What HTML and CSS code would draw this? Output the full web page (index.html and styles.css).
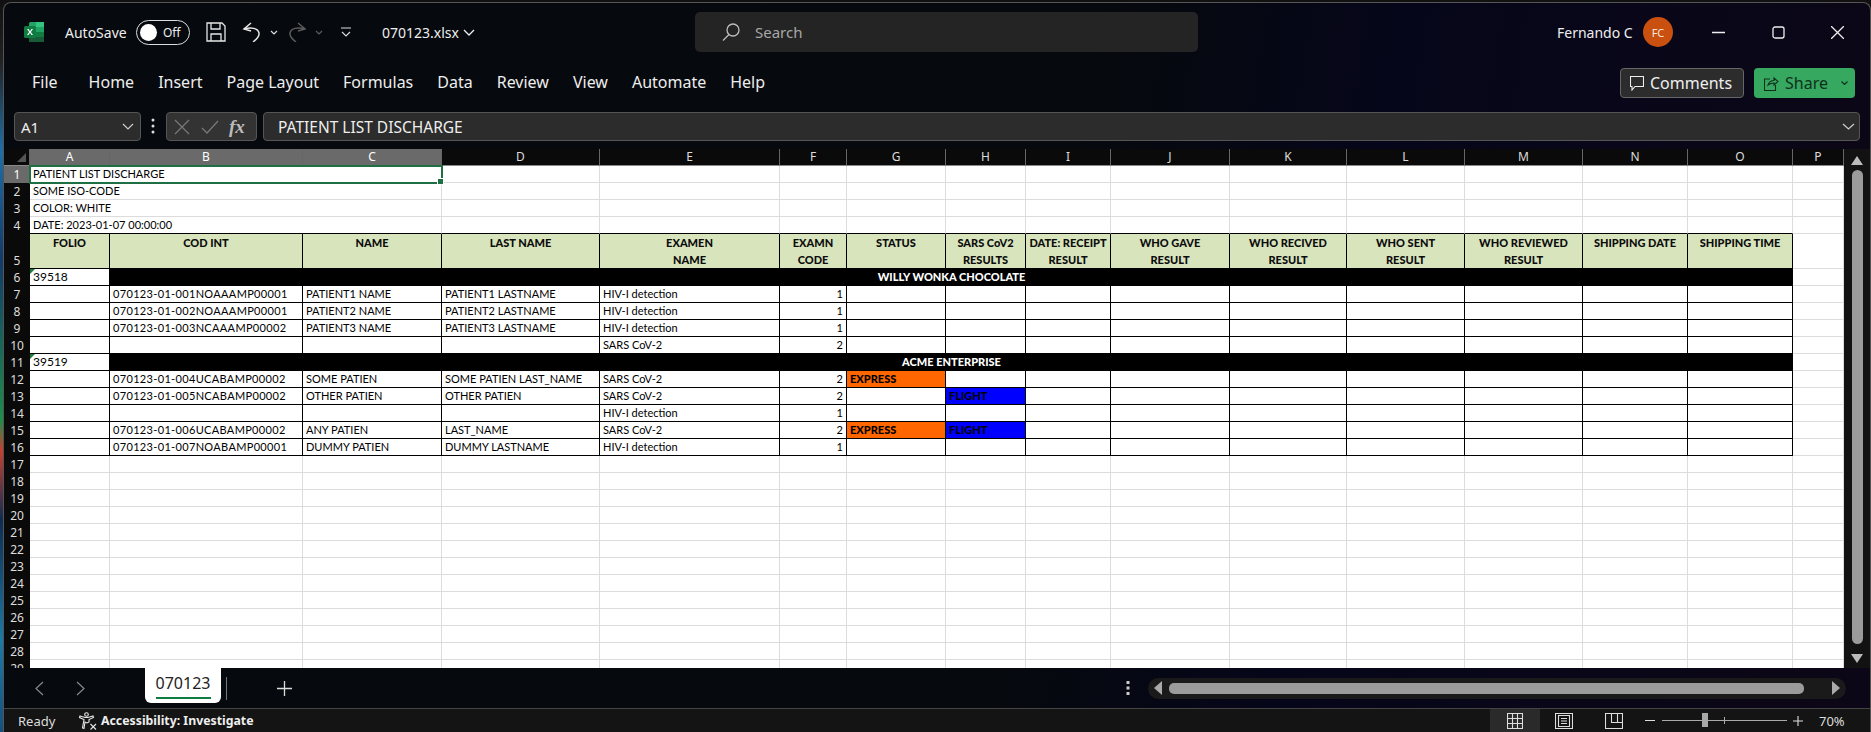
FILE: index.html
```html
<!DOCTYPE html>
<html>
<head>
    <meta charset="utf-8">
    <title>070123.xlsx</title>
    <link rel="stylesheet" href="styles.css">
</head>
<body>
<div class="window">
    <header class="title-bar">
        <svg class="xl-logo" width="20" height="20" viewBox="0 0 20 20">
            <rect x="5" y="0" width="15" height="20" rx="1.5" fill="#21a366"/>
            <rect x="12" y="0" width="8" height="5" fill="#33c481"/>
            <rect x="12" y="10" width="8" height="5" fill="#107c41"/>
            <rect x="5" y="15" width="15" height="5" fill="#185c37"/>
            <rect x="0" y="4" width="12" height="12" rx="1.5" fill="#107c41"/>
            <path d="M3 7l1.5 0 1.5 2.3L7.5 7 9 7 6.8 10 9 13 7.5 13 6 10.7 4.500 13 3 13 5.200 10z" fill="#fff"/>
        </svg>
        <span class="autosave">AutoSave</span>
        <span class="toggle"><i class="knob"></i><em>Off</em></span>
        <svg class="save-ic" width="20" height="20" viewBox="0 0 20 20" fill="none" stroke="#e6e6e6" stroke-width="1.3">
            <path d="M1 1h15l3 3v15H1z"/><path d="M5 1v6h9V1"/><path d="M5 19v-7h10v7"/>
        </svg>
        <svg class="undo-ic" width="20" height="20" viewBox="0 0 20 20" fill="none" stroke="#e6e6e6" stroke-width="1.5">
            <path d="M9 1L2 7l7 2"/><path d="M2 7c7-2 14-1 15 4 .5 3-2 6-6 9"/>
        </svg>
        <svg class="chev-sm" width="8" height="5" viewBox="0 0 8 5" fill="none" stroke="#ddd" stroke-width="1.200"><path d="M1 1l3 3 3-3"/></svg>
        <svg class="redo-ic" width="20" height="20" viewBox="0 0 20 20" fill="none" stroke="#5c5c5c" stroke-width="1.5">
            <path d="M11 1l7 6-7 2"/><path d="M18 7c-7-2-14-1-15 4-.5 3 2 6 6 9"/>
        </svg>
        <svg class="chev-sm" width="8" height="5" viewBox="0 0 8 5" fill="none" stroke="#5c5c5c" stroke-width="1.200"><path d="M1 1l3 3 3-3"/></svg>
        <svg class="qat-more" width="10" height="10" viewBox="0 0 10 10" fill="none" stroke="#ddd" stroke-width="1.100"><path d="M0 1h10"/><path d="M1 5l4 4 4-4"/></svg>
        <span class="file-name">070123.xlsx</span>
        <svg class="chev-file" width="12" height="7" viewBox="0 0 12 7" fill="none" stroke="#eee" stroke-width="1.300"><path d="M1 1l5 5 5-5"/></svg>
        <div class="search-box">
            <svg width="20" height="20" viewBox="0 0 20 20" fill="none" stroke="#bdbdbd" stroke-width="1.300"><circle cx="12" cy="8" r="6"/><path d="M8 12.500L2 18.500"/></svg>
            <span>Search</span>
        </div>
        <span class="user-name">Fernando C</span>
        <span class="avatar">FC</span>
        <svg class="win-min" width="13" height="13" viewBox="0 0 13 13" stroke="#eee" stroke-width="1.300"><path d="M0 6.500h13"/></svg>
        <svg class="win-max" width="13" height="13" viewBox="0 0 13 13" fill="none" stroke="#eee" stroke-width="1.300"><rect x="1" y="1" width="11" height="11" rx="2"/></svg>
        <svg class="win-close" width="13" height="13" viewBox="0 0 13 13" stroke="#eee" stroke-width="1.300"><path d="M0 0l13 13M13 0L0 13"/></svg>
    </header>

    <nav class="ribbon">
        <span class="tab-file">File</span>
        <span>Home</span>
        <span>Insert</span>
        <span>Page Layout</span>
        <span>Formulas</span>
        <span>Data</span>
        <span>Review</span>
        <span>View</span>
        <span>Automate</span>
        <span>Help</span>
        <button class="btn-comments">
            <svg width="14" height="15" viewBox="0 0 14 15" fill="none" stroke="#eee" stroke-width="1.100"><path d="M.5.500h13v10H5l-3 3.500v-3.500H.5z"/></svg>
            Comments
        </button>
        <button class="btn-share">
            <svg width="15" height="15" viewBox="0 0 15 15" fill="none" stroke="#10301c" stroke-width="1.100"><path d="M6 3H.5v11.500h11V9"/><path d="M4 9c1-3 4-4.500 6-4.500V2l4 3.500L10 9V7C8 7 6 7.500 4 9z"/></svg>
            Share
            <svg class="share-chev" width="7" height="4" viewBox="0 0 7 4" fill="none" stroke="#10301c" stroke-width="1.200"><path d="M.5.500l3 3 3-3"/></svg>
        </button>
    </nav>

    <div class="formula-bar">
        <div class="name-box">
            <span>A1</span>
            <svg width="12" height="7" viewBox="0 0 12 7" fill="none" stroke="#ccc" stroke-width="1.200"><path d="M1 1l5 5 5-5"/></svg>
        </div>
        <svg class="fb-dots" width="4" height="16" viewBox="0 0 4 16" fill="#ddd"><circle cx="2" cy="2" r="1.500"/><circle cx="2" cy="8" r="1.500"/><circle cx="2" cy="14" r="1.500"/></svg>
        <div class="fx-box">
            <svg width="16" height="16" viewBox="0 0 16 16" stroke="#777" stroke-width="1.300"><path d="M1 1l14 14M15 1L1 15"/></svg>
            <svg width="18" height="14" viewBox="0 0 18 14" fill="none" stroke="#777" stroke-width="1.300"><path d="M1 8l5 5L17 1"/></svg>
            <span>fx</span>
        </div>
        <div class="formula-input">
            <span>PATIENT LIST DISCHARGE</span>
            <svg width="13" height="7" viewBox="0 0 13 7" fill="none" stroke="#ccc" stroke-width="1.200"><path d="M1 1l5.500 5L12 1"/></svg>
        </div>
    </div>

    <div class="sheet-area">
        <div class="grid-wrap">
            <table class="sheet">
                <colgroup>
                    <col class="w-hdr"><col class="w-a"><col class="w-b"><col class="w-c"><col class="w-d"><col class="w-e"><col class="w-f"><col class="w-g"><col class="w-h"><col class="w-i"><col class="w-j"><col class="w-k"><col class="w-l"><col class="w-m"><col class="w-n"><col class="w-o"><col class="w-p">
                </colgroup>
                <tr class="col-heads">
                    <th class="corner"><i></i></th>
                    <th class="on">A</th><th class="on">B</th><th class="on">C</th><th>D</th><th>E</th><th>F</th><th>G</th><th>H</th><th>I</th><th>J</th><th>K</th><th>L</th><th>M</th><th>N</th><th>O</th><th>P</th>
                </tr>
                <tr><th class="on">1</th><td colspan="3" class="selected">PATIENT LIST DISCHARGE</td><td></td><td></td><td></td><td></td><td></td><td></td><td></td><td></td><td></td><td></td><td></td><td></td><td></td></tr>
                <tr><th>2</th><td colspan="3">SOME ISO-CODE</td><td></td><td></td><td></td><td></td><td></td><td></td><td></td><td></td><td></td><td></td><td></td><td></td><td></td></tr>
                <tr><th>3</th><td colspan="3">COLOR: WHITE</td><td></td><td></td><td></td><td></td><td></td><td></td><td></td><td></td><td></td><td></td><td></td><td></td><td></td></tr>
                <tr class="above-table"><th>4</th><td colspan="3">DATE: 2023-01-07 00:00:00</td><td></td><td></td><td></td><td></td><td></td><td></td><td></td><td></td><td></td><td></td><td></td><td></td><td></td></tr>
                <tr class="head-row">
                    <th class="tall">5</th>
                    <td>FOLIO</td><td>COD INT</td><td>NAME</td><td>LAST NAME</td><td>EXAMEN<br>NAME</td><td>EXAMN<br>CODE</td><td>STATUS</td><td>SARS CoV2<br>RESULTS</td><td>DATE: RECEIPT<br>RESULT</td><td>WHO GAVE<br>RESULT</td><td>WHO RECIVED<br>RESULT</td><td>WHO SENT<br>RESULT</td><td>WHO REVIEWED<br>RESULT</td><td>SHIPPING DATE</td><td>SHIPPING TIME</td>
                    <td class="free"></td>
                </tr>
                <tr class="data"><th>6</th><td class="folio">39518</td><td colspan="14" class="client">WILLY WONKA CHOCOLATE</td><td class="free"></td></tr>
                <tr class="data"><th>7</th><td></td><td class="code">070123-01-001NOAAAMP00001</td><td>PATIENT1 NAME</td><td>PATIENT1 LASTNAME</td><td>HIV-I detection</td><td class="num">1</td><td></td><td></td><td></td><td></td><td></td><td></td><td></td><td></td><td></td><td class="free"></td></tr>
                <tr class="data"><th>8</th><td></td><td class="code">070123-01-002NOAAAMP00001</td><td>PATIENT2 NAME</td><td>PATIENT2 LASTNAME</td><td>HIV-I detection</td><td class="num">1</td><td></td><td></td><td></td><td></td><td></td><td></td><td></td><td></td><td></td><td class="free"></td></tr>
                <tr class="data"><th>9</th><td></td><td class="code">070123-01-003NCAAAMP00002</td><td>PATIENT3 NAME</td><td>PATIENT3 LASTNAME</td><td>HIV-I detection</td><td class="num">1</td><td></td><td></td><td></td><td></td><td></td><td></td><td></td><td></td><td></td><td class="free"></td></tr>
                <tr class="data"><th>10</th><td></td><td></td><td></td><td></td><td>SARS CoV-2</td><td class="num">2</td><td></td><td></td><td></td><td></td><td></td><td></td><td></td><td></td><td></td><td class="free"></td></tr>
                <tr class="data"><th>11</th><td class="folio">39519</td><td colspan="14" class="client">ACME ENTERPRISE</td><td class="free"></td></tr>
                <tr class="data"><th>12</th><td></td><td class="code">070123-01-004UCABAMP00002</td><td>SOME PATIEN</td><td>SOME PATIEN LAST_NAME</td><td>SARS CoV-2</td><td class="num">2</td><td class="express">EXPRESS</td><td></td><td></td><td></td><td></td><td></td><td></td><td></td><td></td><td class="free"></td></tr>
                <tr class="data"><th>13</th><td></td><td class="code">070123-01-005NCABAMP00002</td><td>OTHER PATIEN</td><td>OTHER PATIEN</td><td>SARS CoV-2</td><td class="num">2</td><td></td><td class="flight">FLIGHT</td><td></td><td></td><td></td><td></td><td></td><td></td><td></td><td class="free"></td></tr>
                <tr class="data"><th>14</th><td></td><td></td><td></td><td></td><td>HIV-I detection</td><td class="num">1</td><td></td><td></td><td></td><td></td><td></td><td></td><td></td><td></td><td></td><td class="free"></td></tr>
                <tr class="data"><th>15</th><td></td><td class="code">070123-01-006UCABAMP00002</td><td>ANY PATIEN</td><td>LAST_NAME</td><td>SARS CoV-2</td><td class="num">2</td><td class="express">EXPRESS</td><td class="flight">FLIGHT</td><td></td><td></td><td></td><td></td><td></td><td></td><td></td><td class="free"></td></tr>
                <tr class="data"><th>16</th><td></td><td class="code">070123-01-007NOABAMP00001</td><td>DUMMY PATIEN</td><td>DUMMY LASTNAME</td><td>HIV-I detection</td><td class="num">1</td><td></td><td></td><td></td><td></td><td></td><td></td><td></td><td></td><td></td><td class="free"></td></tr>
                <tr><th>17</th><td></td><td></td><td></td><td></td><td></td><td></td><td></td><td></td><td></td><td></td><td></td><td></td><td></td><td></td><td></td><td></td></tr>
                <tr><th>18</th><td></td><td></td><td></td><td></td><td></td><td></td><td></td><td></td><td></td><td></td><td></td><td></td><td></td><td></td><td></td><td></td></tr>
                <tr><th>19</th><td></td><td></td><td></td><td></td><td></td><td></td><td></td><td></td><td></td><td></td><td></td><td></td><td></td><td></td><td></td><td></td></tr>
                <tr><th>20</th><td></td><td></td><td></td><td></td><td></td><td></td><td></td><td></td><td></td><td></td><td></td><td></td><td></td><td></td><td></td><td></td></tr>
                <tr><th>21</th><td></td><td></td><td></td><td></td><td></td><td></td><td></td><td></td><td></td><td></td><td></td><td></td><td></td><td></td><td></td><td></td></tr>
                <tr><th>22</th><td></td><td></td><td></td><td></td><td></td><td></td><td></td><td></td><td></td><td></td><td></td><td></td><td></td><td></td><td></td><td></td></tr>
                <tr><th>23</th><td></td><td></td><td></td><td></td><td></td><td></td><td></td><td></td><td></td><td></td><td></td><td></td><td></td><td></td><td></td><td></td></tr>
                <tr><th>24</th><td></td><td></td><td></td><td></td><td></td><td></td><td></td><td></td><td></td><td></td><td></td><td></td><td></td><td></td><td></td><td></td></tr>
                <tr><th>25</th><td></td><td></td><td></td><td></td><td></td><td></td><td></td><td></td><td></td><td></td><td></td><td></td><td></td><td></td><td></td><td></td></tr>
                <tr><th>26</th><td></td><td></td><td></td><td></td><td></td><td></td><td></td><td></td><td></td><td></td><td></td><td></td><td></td><td></td><td></td><td></td></tr>
                <tr><th>27</th><td></td><td></td><td></td><td></td><td></td><td></td><td></td><td></td><td></td><td></td><td></td><td></td><td></td><td></td><td></td><td></td></tr>
                <tr><th>28</th><td></td><td></td><td></td><td></td><td></td><td></td><td></td><td></td><td></td><td></td><td></td><td></td><td></td><td></td><td></td><td></td></tr>
                <tr><th>29</th><td></td><td></td><td></td><td></td><td></td><td></td><td></td><td></td><td></td><td></td><td></td><td></td><td></td><td></td><td></td><td></td></tr>
            </table>
        </div>
        <div class="v-scroll">
            <svg width="12" height="9" viewBox="0 0 12 9" fill="#bbb"><path d="M6 0l6 9H0z"/></svg>
            <div class="v-thumb"></div>
            <svg width="12" height="9" viewBox="0 0 12 9" fill="#bbb"><path d="M6 9L0 0h12z"/></svg>
        </div>
    </div>

    <div class="tabs-bar">
        <svg class="nav-prev" width="9" height="15" viewBox="0 0 9 15" fill="none" stroke="#888" stroke-width="1.200"><path d="M8 1L1 7.500 8 14"/></svg>
        <svg class="nav-next" width="9" height="15" viewBox="0 0 9 15" fill="none" stroke="#888" stroke-width="1.200"><path d="M1 1l7 6.500L1 14"/></svg>
        <div class="sheet-tab"><span>070123</span></div>
        <i class="tab-sep"></i>
        <svg class="tab-add" width="15" height="15" viewBox="0 0 15 15" stroke="#ddd" stroke-width="1.300"><path d="M7.500 0v15M0 7.500h15"/></svg>
        <svg class="tab-dots" width="4" height="14" viewBox="0 0 4 14" fill="#ccc"><rect x="0.500" y="0" width="3" height="3"/><rect x="0.500" y="5.500" width="3" height="3"/><rect x="0.500" y="11" width="3" height="3"/></svg>
        <div class="h-scroll">
            <svg width="8" height="14" viewBox="0 0 8 14" fill="#aaa"><path d="M8 0v14L0 7z"/></svg>
            <div class="h-thumb"></div>
            <svg class="h-right" width="8" height="14" viewBox="0 0 8 14" fill="#aaa"><path d="M0 0v14l8-7z"/></svg>
        </div>
    </div>

    <footer class="status-bar">
        <span class="ready">Ready</span>
        <svg class="a11y-ic" width="18" height="18" viewBox="0 0 18 18" fill="none" stroke="#e6e6e6" stroke-width="1.100">
            <circle cx="7.500" cy="2.500" r="1.800"/>
            <path d="M1 4l5 1.500h3L14 4l.5 1.500L10 7.500V10l-2 1-2-1-1 6.500-1.500-.5L5 7.500.5 5.500z"/>
            <path d="M11.500 12l5.500 5.500M17 12l-5.500 5.500"/>
        </svg>
        <b class="a11y-text">Accessibility: Investigate</b>
        <div class="view-btn view-on">
            <svg width="16" height="16" viewBox="0 0 16 16" fill="none" stroke="#ddd" stroke-width="1.100"><path d="M.5.500h15v15H.5zM5.500.500v15M10.500.500v15M.5 5.500h15M.5 10.500h15"/></svg>
        </div>
        <svg class="view-page" width="18" height="16" viewBox="0 0 18 16" fill="none" stroke="#ddd" stroke-width="1.100"><path d="M.5.500h17v15H.5zM3.500 2.500h11v11h-11zM6 5.500h6M6 8h6M6 10.500h6"/></svg>
        <svg class="view-break" width="18" height="16" viewBox="0 0 18 16" fill="none" stroke="#ddd" stroke-width="1.100"><path d="M.5.500h17v15H.5zM6.500.500v9h11M12.500.500v9"/></svg>
        <span class="zoom-minus"></span>
        <div class="zoom-track"><i class="zoom-mark"></i><i class="zoom-thumb"></i></div>
        <svg class="zoom-plus" width="10" height="10" viewBox="0 0 10 10" stroke="#ddd" stroke-width="1.100"><path d="M5 0v10M0 5h10"/></svg>
        <span class="zoom-pct">70%</span>
    </footer>
</div>
</body>
</html>
```

FILE: styles.css
```css
html, body {
    margin: 0;
    height: 732px;
    overflow: hidden;
}
body {
    background: linear-gradient(180deg, #111 0, #222 60px, #1d6fa8 150px, #123a6a 260px, #1a8f4a 420px, #c7402f 450px, #0d2c52 520px, #1a7aa8 640px, #14507f 732px);
}
svg {
    flex-shrink: 0;
    display: block;
}
.window {
    box-sizing: border-box;
    height: 730px;
    margin: 2px 0 0 3px;
    border: 1px solid #555;
    border-bottom: none;
    border-radius: 8px 8px 0 0;
    overflow: hidden;
    display: flex;
    flex-direction: column;
    color: #eee;
    font-family: "Noto Sans", sans-serif;
    background: linear-gradient(100deg, #06090d 0, #06090d 55%, #06061a 70%, #0c0716 100%);
}

/* title bar */
.title-bar {
    height: 46px;
    flex-shrink: 0;
    display: flex;
    align-items: center;
    font-size: 14px;
    padding-top: 12px;
    box-sizing: border-box;
}
.xl-logo { margin-left: 20px; }
.autosave { margin-left: 21px; width: 64px; white-space: nowrap; }
.toggle {
    margin-left: 7px;
    box-sizing: border-box;
    width: 54px;
    height: 25px;
    border: 1px solid #ddd;
    border-radius: 13px;
    display: flex;
    align-items: center;
    padding-left: 3px;
    gap: 6px;
    font-size: 12px;
}
.toggle .knob {
    width: 17px;
    height: 17px;
    border-radius: 50%;
    background: #fff;
}
.toggle em { font-style: normal; }
.save-ic { margin-left: 16px; }
.undo-ic { margin-left: 16px; }
.chev-sm { margin-left: 8px; }
.redo-ic { margin-left: 9px; }
.qat-more { margin-left: 18px; }
.file-name { margin-left: 31px; width: 76px; white-space: nowrap; }
.chev-file { margin-left: 5px; }
.search-box {
    margin-left: 220px;
    width: 503px;
    height: 40px;
    box-sizing: border-box;
    background: #242424;
    border-radius: 5px;
    display: flex;
    align-items: center;
    padding-left: 26px;
    gap: 14px;
    color: #a8a8a8;
    font-size: 15px;
}
.user-name { margin-left: 359px; width: 76px; white-space: nowrap; }
.avatar {
    margin-left: 10px;
    width: 30px;
    height: 30px;
    border-radius: 50%;
    background: #ca5010;
    display: flex;
    align-items: center;
    justify-content: center;
    font-size: 11px;
    color: #f5e6dc;
}
.win-min { margin-left: 39px; }
.win-max { margin-left: 47px; }
.win-close { margin-left: 46px; }

/* ribbon tabs */
.ribbon {
    height: 63px;
    flex-shrink: 0;
    display: flex;
    align-items: flex-start;
    font-size: 16px;
    gap: 24px;
    box-sizing: border-box;
    padding: 23px 15px 0 28px;
    line-height: 20px;
}
.ribbon .tab-file { margin-right: 7px; }
.btn-comments, .btn-share {
    font-family: inherit;
    font-size: 16px;
    color: #eee;
    height: 30px;
    box-sizing: border-box;
    border-radius: 4px;
    display: flex;
    align-items: center;
    margin-top: -4px;
    padding: 0;
}
.btn-comments {
    margin-left: auto;
    width: 124px;
    background: #2c2c2c;
    border: 1px solid #666;
    gap: 6px;
    padding-left: 9px;
}
.btn-share {
    margin-left: -14px;
    width: 101px;
    background: #36a860;
    border: none;
    color: #10301c;
    gap: 6px;
    padding-left: 10px;
}
.share-chev { margin-left: 7px; }

/* formula bar */
.formula-bar {
    height: 37px;
    flex-shrink: 0;
    display: flex;
    align-items: flex-start;
    font-size: 15px;
    box-sizing: border-box;
    padding-left: 10px;
}
.name-box, .fx-box, .formula-input {
    height: 29px;
    box-sizing: border-box;
    background: #2c2c2c;
    border: 1px solid #555;
    border-radius: 4px;
    display: flex;
    align-items: center;
}
.name-box {
    width: 127px;
    justify-content: space-between;
    padding: 0 6px 0 6px;
}
.fb-dots { margin: 6px 0 0 10px; }
.fx-box {
    margin-left: 11px;
    width: 91px;
    padding-left: 7px;
    gap: 11px;
    background: #333;
}
.fx-box span {
    font-family: "Liberation Serif", serif;
    font-style: italic;
    font-weight: bold;
    font-size: 19px;
    color: #bbb;
    margin-left: -1px;
}
.formula-input {
    margin-left: 6px;
    width: 1597px;
    justify-content: space-between;
    padding: 0 4px 0 14px;
    font-size: 15.5px;
}

/* sheet */
.sheet-area {
    height: 519px;
    flex-shrink: 0;
    display: flex;
    overflow: hidden;
}
.grid-wrap {
    width: 1840px;
    height: 519px;
    overflow: hidden;
    background: #fff;
}
.sheet {
    table-layout: fixed;
    width: 1840px;
    border-collapse: separate;
    border-spacing: 0;
    font-family: Lato, sans-serif;
    font-size: 11px;
    color: #000;
}
.w-hdr { width: 26px; }
.w-a { width: 80px; }
.w-b { width: 193px; }
.w-c { width: 139px; }
.w-d { width: 158px; }
.w-e { width: 180px; }
.w-f { width: 67px; }
.w-g { width: 99px; }
.w-h { width: 80px; }
.w-i { width: 85px; }
.w-j { width: 119px; }
.w-k { width: 117px; }
.w-l { width: 118px; }
.w-m { width: 118px; }
.w-n { width: 105px; }
.w-o { width: 105px; }
.w-p { width: 51px; }
.sheet tr { height: 17px; }
.sheet th {
    padding: 0;
    font-weight: normal;
    background: #0a0a0a;
    color: #ddd;
    font-size: 12px;
    line-height: 16px;
    text-align: center;
    font-family: "Noto Sans", sans-serif;
    overflow: hidden;
}
.sheet th.on { background: #6a6a6a; color: #fff; }
.sheet th.tall { vertical-align: bottom; }
.sheet td {
    box-sizing: border-box;
    padding: 0 2px 0 3px;
    height: 17px;
    line-height: 16px;
    border-right: 1px solid #dcdcdc;
    border-bottom: 1px solid #dcdcdc;
    white-space: nowrap;
    overflow: hidden;
    vertical-align: bottom;
}
.col-heads { height: 16px; }
.col-heads th {
    height: 16px;
    box-sizing: border-box;
    border-right: 1px solid #666;
    border-bottom: 1px solid #8a8a8a;
}
.col-heads th.corner { position: relative; background: #0a0a0a; }
.corner i {
    position: absolute;
    right: 3px;
    bottom: 3px;
    width: 0;
    height: 0;
    border-left: 9px solid transparent;
    border-bottom: 9px solid #555;
}
.sheet td.selected {
    position: relative;
    overflow: visible;
    outline: 2px solid #1f6f45;
    outline-offset: -1px;
}
.sheet td.selected::after {
    content: "";
    position: absolute;
    right: -3px;
    bottom: -3px;
    width: 5px;
    height: 5px;
    background: #1f6f45;
    border: 1px solid #fff;
}
.above-table td:nth-child(-n+15) { border-bottom-color: #000; }
.above-table td:last-child { border-bottom-color: #dcdcdc; }
.head-row { height: 34px; }
.head-row th { background: #0a0a0a; }
.head-row td {
    height: 34px;
    background: #d8e4bc;
    font-weight: 900;
    font-size: 11px;
    line-height: 17px;
    text-align: center;
    vertical-align: top;
    border-right: 1px solid #000;
    border-bottom: 1px solid #000;
    padding: 0;
    white-space: nowrap;
    color: #0c0c0c;
}
.data td {
    border-right: 1px solid #000;
    border-bottom: 1px solid #000;
}
.data td.code { letter-spacing: .33px; }
.data td.num { text-align: right; padding-right: 3px; }
.data td.folio { position: relative; font-size: 12px; vertical-align: bottom; }
.folio::before {
    content: "";
    position: absolute;
    left: 0;
    top: 0;
    border-top: 5px solid #1f7a3d;
    border-right: 5px solid transparent;
}
.data td.client {
    background: #000;
    color: #fff;
    font-weight: 900;
    text-align: center;
}
.data td.express { background: #ff6600; font-weight: 900; }
.data td.flight { background: #0000ff; font-weight: 900; }
.data td.free {
    border-right-color: #dcdcdc;
    border-bottom-color: #dcdcdc;
}
.head-row td.free {
    background: #fff;
    border-right-color: #dcdcdc;
    border-bottom-color: #dcdcdc;
}

.v-scroll {
    flex: 1;
    background: #121212;
    display: flex;
    flex-direction: column;
    align-items: center;
    padding-top: 7px;
    box-sizing: border-box;
}
.v-thumb {
    width: 11px;
    height: 474px;
    margin: 5px 0 10px;
    border-radius: 6px;
    background: #9b9b9b;
}

/* sheet tabs and scrollbar */
.tabs-bar {
    height: 40px;
    flex-shrink: 0;
    display: flex;
    align-items: center;
}
.nav-prev { margin-left: 31px; }
.nav-next { margin-left: 32px; }
.sheet-tab {
    box-sizing: border-box;
    margin-left: 60px;
    width: 76px;
    height: 35px;
    background: #fff;
    border-radius: 0 0 6px 6px;
    color: #222;
    font-size: 16px;
    text-align: center;
    line-height: 30px;
    align-self: flex-start;
}
.sheet-tab span {
    display: inline-block;
    height: 29px;
    width: 55px;
    border-bottom: 2px solid #107c41;
}
.tab-sep {
    width: 1px;
    height: 23px;
    margin-left: 5px;
    background: #777;
}
.tab-add { margin-left: 50px; }
.tab-dots { margin-left: 834px; }
.h-scroll {
    margin-left: 18px;
    width: 698px;
    height: 21px;
    border-radius: 11px;
    background: #1a1a1a;
    display: flex;
    align-items: center;
    box-sizing: border-box;
    padding: 0 6px;
}
.h-thumb {
    width: 635px;
    height: 11px;
    margin-left: 7px;
    border-radius: 5px;
    background: #9b9b9b;
}
.h-right { margin-left: auto; }

/* status bar */
.status-bar {
    flex: 1;
    background: #141414;
    border-top: 1px solid #444;
    display: flex;
    align-items: center;
    font-size: 13px;
    color: #ddd;
    box-sizing: border-box;
}
.ready { margin-left: 14px; width: 36px; white-space: nowrap; }
.a11y-ic { margin-left: 25px; }
.a11y-text { margin-left: 4px; width: 152px; white-space: nowrap; color: #eee; font-size: 12.3px; }
.view-btn {
    box-sizing: border-box;
    width: 50px;
    height: 100%;
    display: flex;
    align-items: center;
    justify-content: center;
}
.view-on { margin-left: 1237px; background: #2a2a2a; }
.view-page { margin-left: 15px; }
.view-break { margin-left: 32px; }
.zoom-minus {
    margin-left: 22px;
    width: 10px;
    height: 1px;
    background: #ddd;
}
.zoom-track {
    position: relative;
    margin-left: 7px;
    width: 125px;
    height: 1px;
    background: #aaa;
}
.zoom-thumb {
    position: absolute;
    left: 40px;
    top: -7px;
    width: 6px;
    height: 14px;
    background: #a8a8a8;
}
.zoom-mark {
    position: absolute;
    left: 62px;
    top: -3px;
    width: 1px;
    height: 7px;
    background: #aaa;
}
.zoom-plus { margin-left: 6px; }
.zoom-pct { margin-left: 16px; white-space: nowrap; }
```
